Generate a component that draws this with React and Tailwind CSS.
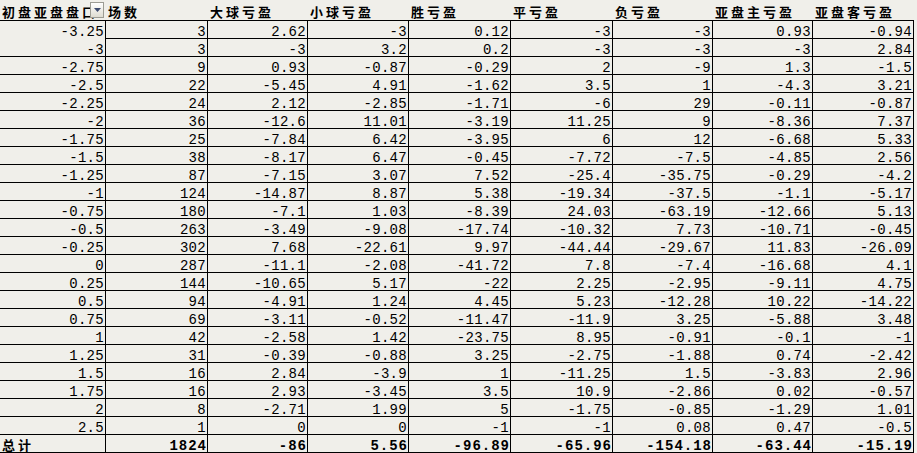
import React from "react";

const headers = ["初盘亚盘盘口", "场数", "大球亏盈", "小球亏盈", "胜亏盈", "平亏盈", "负亏盈", "亚盘主亏盈", "亚盘客亏盈"];

const rows = [
  ["-3.25", "3", "2.62", "-3", "0.12", "-3", "-3", "0.93", "-0.94"],
  ["-3", "3", "-3", "3.2", "0.2", "-3", "-3", "-3", "2.84"],
  ["-2.75", "9", "0.93", "-0.87", "-0.29", "2", "-9", "1.3", "-1.5"],
  ["-2.5", "22", "-5.45", "4.91", "-1.62", "3.5", "1", "-4.3", "3.21"],
  ["-2.25", "24", "2.12", "-2.85", "-1.71", "-6", "29", "-0.11", "-0.87"],
  ["-2", "36", "-12.6", "11.01", "-3.19", "11.25", "9", "-8.36", "7.37"],
  ["-1.75", "25", "-7.84", "6.42", "-3.95", "6", "12", "-6.68", "5.33"],
  ["-1.5", "38", "-8.17", "6.47", "-0.45", "-7.72", "-7.5", "-4.85", "2.56"],
  ["-1.25", "87", "-7.15", "3.07", "7.52", "-25.4", "-35.75", "-0.29", "-4.2"],
  ["-1", "124", "-14.87", "8.87", "5.38", "-19.34", "-37.5", "-1.1", "-5.17"],
  ["-0.75", "180", "-7.1", "1.03", "-8.39", "24.03", "-63.19", "-12.66", "5.13"],
  ["-0.5", "263", "-3.49", "-9.08", "-17.74", "-10.32", "7.73", "-10.71", "-0.45"],
  ["-0.25", "302", "7.68", "-22.61", "9.97", "-44.44", "-29.67", "11.83", "-26.09"],
  ["0", "287", "-11.1", "-2.08", "-41.72", "7.8", "-7.4", "-16.68", "4.1"],
  ["0.25", "144", "-10.65", "5.17", "-22", "2.25", "-2.95", "-9.11", "4.75"],
  ["0.5", "94", "-4.91", "1.24", "4.45", "5.23", "-12.28", "10.22", "-14.22"],
  ["0.75", "69", "-3.11", "-0.52", "-11.47", "-11.9", "3.25", "-5.88", "3.48"],
  ["1", "42", "-2.58", "1.42", "-23.75", "8.95", "-0.91", "-0.1", "-1"],
  ["1.25", "31", "-0.39", "-0.88", "3.25", "-2.75", "-1.88", "0.74", "-2.42"],
  ["1.5", "16", "2.84", "-3.9", "1", "-11.25", "1.5", "-3.83", "2.96"],
  ["1.75", "16", "2.93", "-3.45", "3.5", "10.9", "-2.86", "0.02", "-0.57"],
  ["2", "8", "-2.71", "1.99", "5", "-1.75", "-0.85", "-1.29", "1.01"],
  ["2.5", "1", "0", "0", "-1", "-1", "0.08", "0.47", "-0.5"],
];

const total = ["总计", "1824", "-86", "5.56", "-96.89", "-65.96", "-154.18", "-63.44", "-15.19"];

function DropButton() {
  return (
    <div className="absolute left-[90px] top-[2px] w-[14px] h-[16px] border border-[#9c9c94] bg-gradient-to-b from-[#ffffff] to-[#dedcd2] flex items-start justify-center pt-[5px]">
      <svg width="7" height="5" viewBox="0 0 7 5">
        <path d="M0 0 H7 L3.5 4 Z" fill="#3c4a6e" />
      </svg>
    </div>
  );
}

export default function App() {
  return (
    <div className="w-[917px] h-[453px] bg-[#F0EFEA] overflow-hidden text-black">
      <div className="grid grid-cols-[106px_102px_100px_101px_102px_102px_100px_100px_101px] w-[914px]">
        {headers.map((h, i) => (
          <div
            key={"h" + i}
            className="relative h-[21px] border-b border-black pl-[2px] pt-[2px] text-[13px] leading-[19px] font-bold tracking-[3px] whitespace-nowrap overflow-hidden font-['Noto_Sans_CJK_SC',sans-serif]"
          >
            {h}
            {i === 0 && <DropButton />}
          </div>
        ))}
        {rows.map((r, ri) =>
          r.map((v, ci) => (
            <div
              key={ri + "-" + ci}
              className={
                ri === 0 && ci === 0
                  ? "h-[18px] border-r border-black text-right pr-[1px] pt-[3px] text-[14px] leading-[17px] tracking-[0.3px] whitespace-nowrap font-['Liberation_Mono',monospace]"
                  : "h-[18px] border-r border-b border-black text-right pr-[1px] pt-[3px] text-[14px] leading-[17px] tracking-[0.3px] whitespace-nowrap font-['Liberation_Mono',monospace]"
              }
            >
              {v}
            </div>
          ))
        )}
        {total.map((v, ci) =>
          ci === 0 ? (
            <div
              key={"t" + ci}
              className="h-[18px] border-r border-b border-black pl-[2px] pt-[1px] text-[13px] leading-[17px] font-bold tracking-[3px] whitespace-nowrap font-['Noto_Sans_CJK_SC',sans-serif]"
            >
              {v}
            </div>
          ) : (
            <div
              key={"t" + ci}
              className="h-[18px] border-r border-b border-black text-right pr-0 pt-[3px] text-[14px] leading-[17px] font-bold tracking-[1px] whitespace-nowrap font-['Liberation_Mono',monospace]"
            >
              {v}
            </div>
          )
        )}
      </div>
    </div>
  );
}
